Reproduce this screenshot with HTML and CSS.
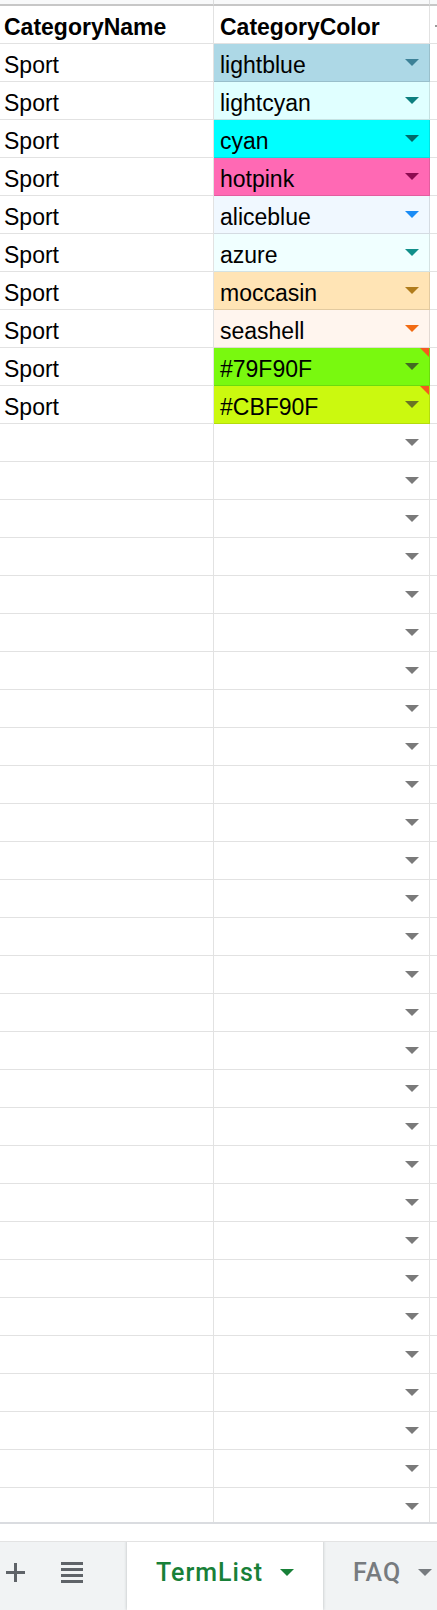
FILE: index.html
```html
<!DOCTYPE html>
<html>
<head>
<meta charset="utf-8">
<link rel="stylesheet" href="styles.css">
</head>
<body>
<div class="grid">
  <div class="row strip"><div class="c a"></div><div class="c b"></div><div class="c x"></div></div>
  <div class="row head"><div class="c a">CategoryName</div><div class="c b">CategoryColor</div><div class="c x mark"></div></div>
  <div class="row"><div class="c a">Sport</div><div class="c b f-lightblue"><span>lightblue</span><i class="dd"></i></div><div class="c x"></div></div>
  <div class="row"><div class="c a">Sport</div><div class="c b f-lightcyan"><span>lightcyan</span><i class="dd"></i></div><div class="c x"></div></div>
  <div class="row"><div class="c a">Sport</div><div class="c b f-cyan"><span>cyan</span><i class="dd"></i></div><div class="c x"></div></div>
  <div class="row"><div class="c a">Sport</div><div class="c b f-hotpink"><span>hotpink</span><i class="dd"></i></div><div class="c x"></div></div>
  <div class="row"><div class="c a">Sport</div><div class="c b f-aliceblue"><span>aliceblue</span><i class="dd"></i></div><div class="c x"></div></div>
  <div class="row"><div class="c a">Sport</div><div class="c b f-azure"><span>azure</span><i class="dd"></i></div><div class="c x"></div></div>
  <div class="row"><div class="c a">Sport</div><div class="c b f-moccasin"><span>moccasin</span><i class="dd"></i></div><div class="c x"></div></div>
  <div class="row"><div class="c a">Sport</div><div class="c b f-seashell"><span>seashell</span><i class="dd"></i></div><div class="c x"></div></div>
  <div class="row"><div class="c a">Sport</div><div class="c b f-green flag"><span>#79F90F</span><i class="dd"></i></div><div class="c x"></div></div>
  <div class="row"><div class="c a">Sport</div><div class="c b f-lime flag"><span>#CBF90F</span><i class="dd"></i></div><div class="c x"></div></div>
  <div class="row"><div class="c a"></div><div class="c b"><i class="dd"></i></div><div class="c x"></div></div>
  <div class="row"><div class="c a"></div><div class="c b"><i class="dd"></i></div><div class="c x"></div></div>
  <div class="row"><div class="c a"></div><div class="c b"><i class="dd"></i></div><div class="c x"></div></div>
  <div class="row"><div class="c a"></div><div class="c b"><i class="dd"></i></div><div class="c x"></div></div>
  <div class="row"><div class="c a"></div><div class="c b"><i class="dd"></i></div><div class="c x"></div></div>
  <div class="row"><div class="c a"></div><div class="c b"><i class="dd"></i></div><div class="c x"></div></div>
  <div class="row"><div class="c a"></div><div class="c b"><i class="dd"></i></div><div class="c x"></div></div>
  <div class="row"><div class="c a"></div><div class="c b"><i class="dd"></i></div><div class="c x"></div></div>
  <div class="row"><div class="c a"></div><div class="c b"><i class="dd"></i></div><div class="c x"></div></div>
  <div class="row"><div class="c a"></div><div class="c b"><i class="dd"></i></div><div class="c x"></div></div>
  <div class="row"><div class="c a"></div><div class="c b"><i class="dd"></i></div><div class="c x"></div></div>
  <div class="row"><div class="c a"></div><div class="c b"><i class="dd"></i></div><div class="c x"></div></div>
  <div class="row"><div class="c a"></div><div class="c b"><i class="dd"></i></div><div class="c x"></div></div>
  <div class="row"><div class="c a"></div><div class="c b"><i class="dd"></i></div><div class="c x"></div></div>
  <div class="row"><div class="c a"></div><div class="c b"><i class="dd"></i></div><div class="c x"></div></div>
  <div class="row"><div class="c a"></div><div class="c b"><i class="dd"></i></div><div class="c x"></div></div>
  <div class="row"><div class="c a"></div><div class="c b"><i class="dd"></i></div><div class="c x"></div></div>
  <div class="row"><div class="c a"></div><div class="c b"><i class="dd"></i></div><div class="c x"></div></div>
  <div class="row"><div class="c a"></div><div class="c b"><i class="dd"></i></div><div class="c x"></div></div>
  <div class="row"><div class="c a"></div><div class="c b"><i class="dd"></i></div><div class="c x"></div></div>
  <div class="row"><div class="c a"></div><div class="c b"><i class="dd"></i></div><div class="c x"></div></div>
  <div class="row"><div class="c a"></div><div class="c b"><i class="dd"></i></div><div class="c x"></div></div>
  <div class="row"><div class="c a"></div><div class="c b"><i class="dd"></i></div><div class="c x"></div></div>
  <div class="row"><div class="c a"></div><div class="c b"><i class="dd"></i></div><div class="c x"></div></div>
  <div class="row"><div class="c a"></div><div class="c b"><i class="dd"></i></div><div class="c x"></div></div>
  <div class="row"><div class="c a"></div><div class="c b"><i class="dd"></i></div><div class="c x"></div></div>
  <div class="row"><div class="c a"></div><div class="c b"><i class="dd"></i></div><div class="c x"></div></div>
  <div class="row"><div class="c a"></div><div class="c b"><i class="dd"></i></div><div class="c x"></div></div>
  <div class="row"><div class="c a"></div><div class="c b"><i class="dd"></i></div><div class="c x"></div></div>
</div>
<div class="gap"></div>
<div class="tabbar">
  <div class="tools">
    <svg class="plus" width="19" height="19" viewBox="0 0 19 19"><path d="M9.5 0V19M0 9.5H19" stroke="#5f6368" stroke-width="3"/></svg>
    <svg class="list" width="22" height="21" viewBox="0 0 22 21"><rect x="0" y="0" width="22" height="3" fill="#5f6368"/><rect x="0" y="6" width="22" height="3" fill="#5f6368"/><rect x="0" y="12" width="22" height="3" fill="#5f6368"/><rect x="0" y="18" width="22" height="3" fill="#5f6368"/></svg>
  </div>
  <div class="tab active"><div class="tab-in"><span class="tab-name">TermList</span><i class="tab-dd"></i></div></div>
  <div class="tab other"><div class="tab-in"><span class="tab-name">FAQ</span><i class="tab-dd"></i></div></div>
</div>
</body>
</html>
```

FILE: styles.css
```css
html, body {
  margin: 0;
  padding: 0;
  background: #ffffff;
}
body {
  width: 437px;
  height: 1610px;
  overflow: hidden;
  font-family: "Liberation Sans", Arial, sans-serif;
  color: #000;
}
.grid {
  height: 1522px;
  overflow: hidden;
  border-bottom: 2px solid #dadce0;
}
.row {
  display: grid;
  grid-template-columns: 214px 216px 1fr;
  height: 38px;
}
.c {
  box-sizing: border-box;
  position: relative;
  display: flex;
  align-items: flex-end;
  height: 38px;
  padding: 0 10px 2.5px 4px;
  border-right: 1px solid rgba(0, 0, 0, 0.115);
  border-bottom: 1px solid rgba(0, 0, 0, 0.115);
  font-size: 23px;
  line-height: normal;
  white-space: nowrap;
  overflow: hidden;
}
.c.b { padding-left: 6px; }
.c.x { border-right: none; padding-left: 5px; }
.strip { height: 6px; }
.strip .c {
  height: 6px;
  background: #f8f9fa;
  border-bottom: 2px solid #c7c7c7;
  padding: 0;
}
.head .c { font-weight: bold; }
.mark::before {
  content: "";
  position: absolute;
  left: 5px;
  top: 19px;
  width: 3px;
  height: 2px;
  background: #9a9a9a;
}

.dd {
  --ar: #7a7a7a;
  display: block;
  flex-shrink: 0;
  align-self: flex-start;
  margin-top: 15px;
  margin-left: auto;
  width: 0;
  height: 0;
  border-left: 7.5px solid transparent;
  border-right: 7.5px solid transparent;
  border-top: 7px solid var(--ar);
}

.f-lightblue { background: #add8e6; }
.f-lightblue .dd { --ar: #3d8197; }
.f-lightcyan { background: #e0ffff; }
.f-lightcyan .dd { --ar: #0d7f7f; }
.f-cyan { background: #00ffff; }
.f-cyan .dd { --ar: #006a6a; }
.f-hotpink { background: #ff69b4; }
.f-hotpink .dd { --ar: #8d0b50; }
.f-aliceblue { background: #f0f8ff; }
.f-aliceblue .dd { --ar: #1a8cf5; }
.f-azure { background: #f0ffff; }
.f-azure .dd { --ar: #118f8a; }
.f-moccasin { background: #ffe4b5; }
.f-moccasin .dd { --ar: #b07c1c; }
.f-seashell { background: #fff5ee; }
.f-seashell .dd { --ar: #f26b12; }
.f-green { background: #79f90f; }
.f-green .dd { --ar: #436b22; }
.f-lime { background: #cbf90f; }
.f-lime .dd { --ar: #6a7424; }

.flag::after {
  content: "";
  position: absolute;
  top: 0;
  right: -1px;
  width: 0;
  height: 0;
  border-top: 10px solid #f6581f;
  border-left: 10px solid transparent;
}

.gap { height: 17px; }

.tabbar {
  box-sizing: border-box;
  height: 69px;
  border-top: 1px solid #e3e3e3;
  background: #f1f3f4;
  display: flex;
  align-items: flex-start;
  overflow: hidden;
  font-family: Roboto, "Liberation Sans", Arial, sans-serif;
}
.tools {
  flex-shrink: 0;
  display: flex;
  align-items: center;
  height: 29px;
  margin-top: 16px;
  padding-left: 6px;
  width: 127px;
  box-sizing: border-box;
}
.tools .plus { display: block; }
.tools .list { display: block; margin-left: 36px; }

.tab {
  flex-shrink: 0;
  box-sizing: border-box;
  padding: 0 29px;
}
.tab.active {
  background: #fff;
  margin-top: -2px;
  height: 70px;
  width: 196px;
  box-shadow: 0 0 3px rgba(60, 64, 67, 0.3);
  position: relative;
}
.tab.active .tab-in { margin-top: 18px; }
.tab.other { margin-left: 1px; }
.tab.other .tab-in { margin-top: 16px; }
.tab-in {
  display: flex;
  align-items: center;
  height: 29px;
}
.tab-name {
  font-size: 25px;
  font-weight: 500;
  letter-spacing: 1px;
  line-height: 29px;
}
.active .tab-name { color: #188038; }
.other .tab-name { color: #777b7f; }
.tab-dd {
  display: block;
  flex-shrink: 0;
  width: 0;
  height: 0;
  margin-left: 17px;
  border-left: 7px solid transparent;
  border-right: 7px solid transparent;
  border-top: 7px solid #188038;
}
.other .tab-dd { border-top-color: #777b7f; }
```
